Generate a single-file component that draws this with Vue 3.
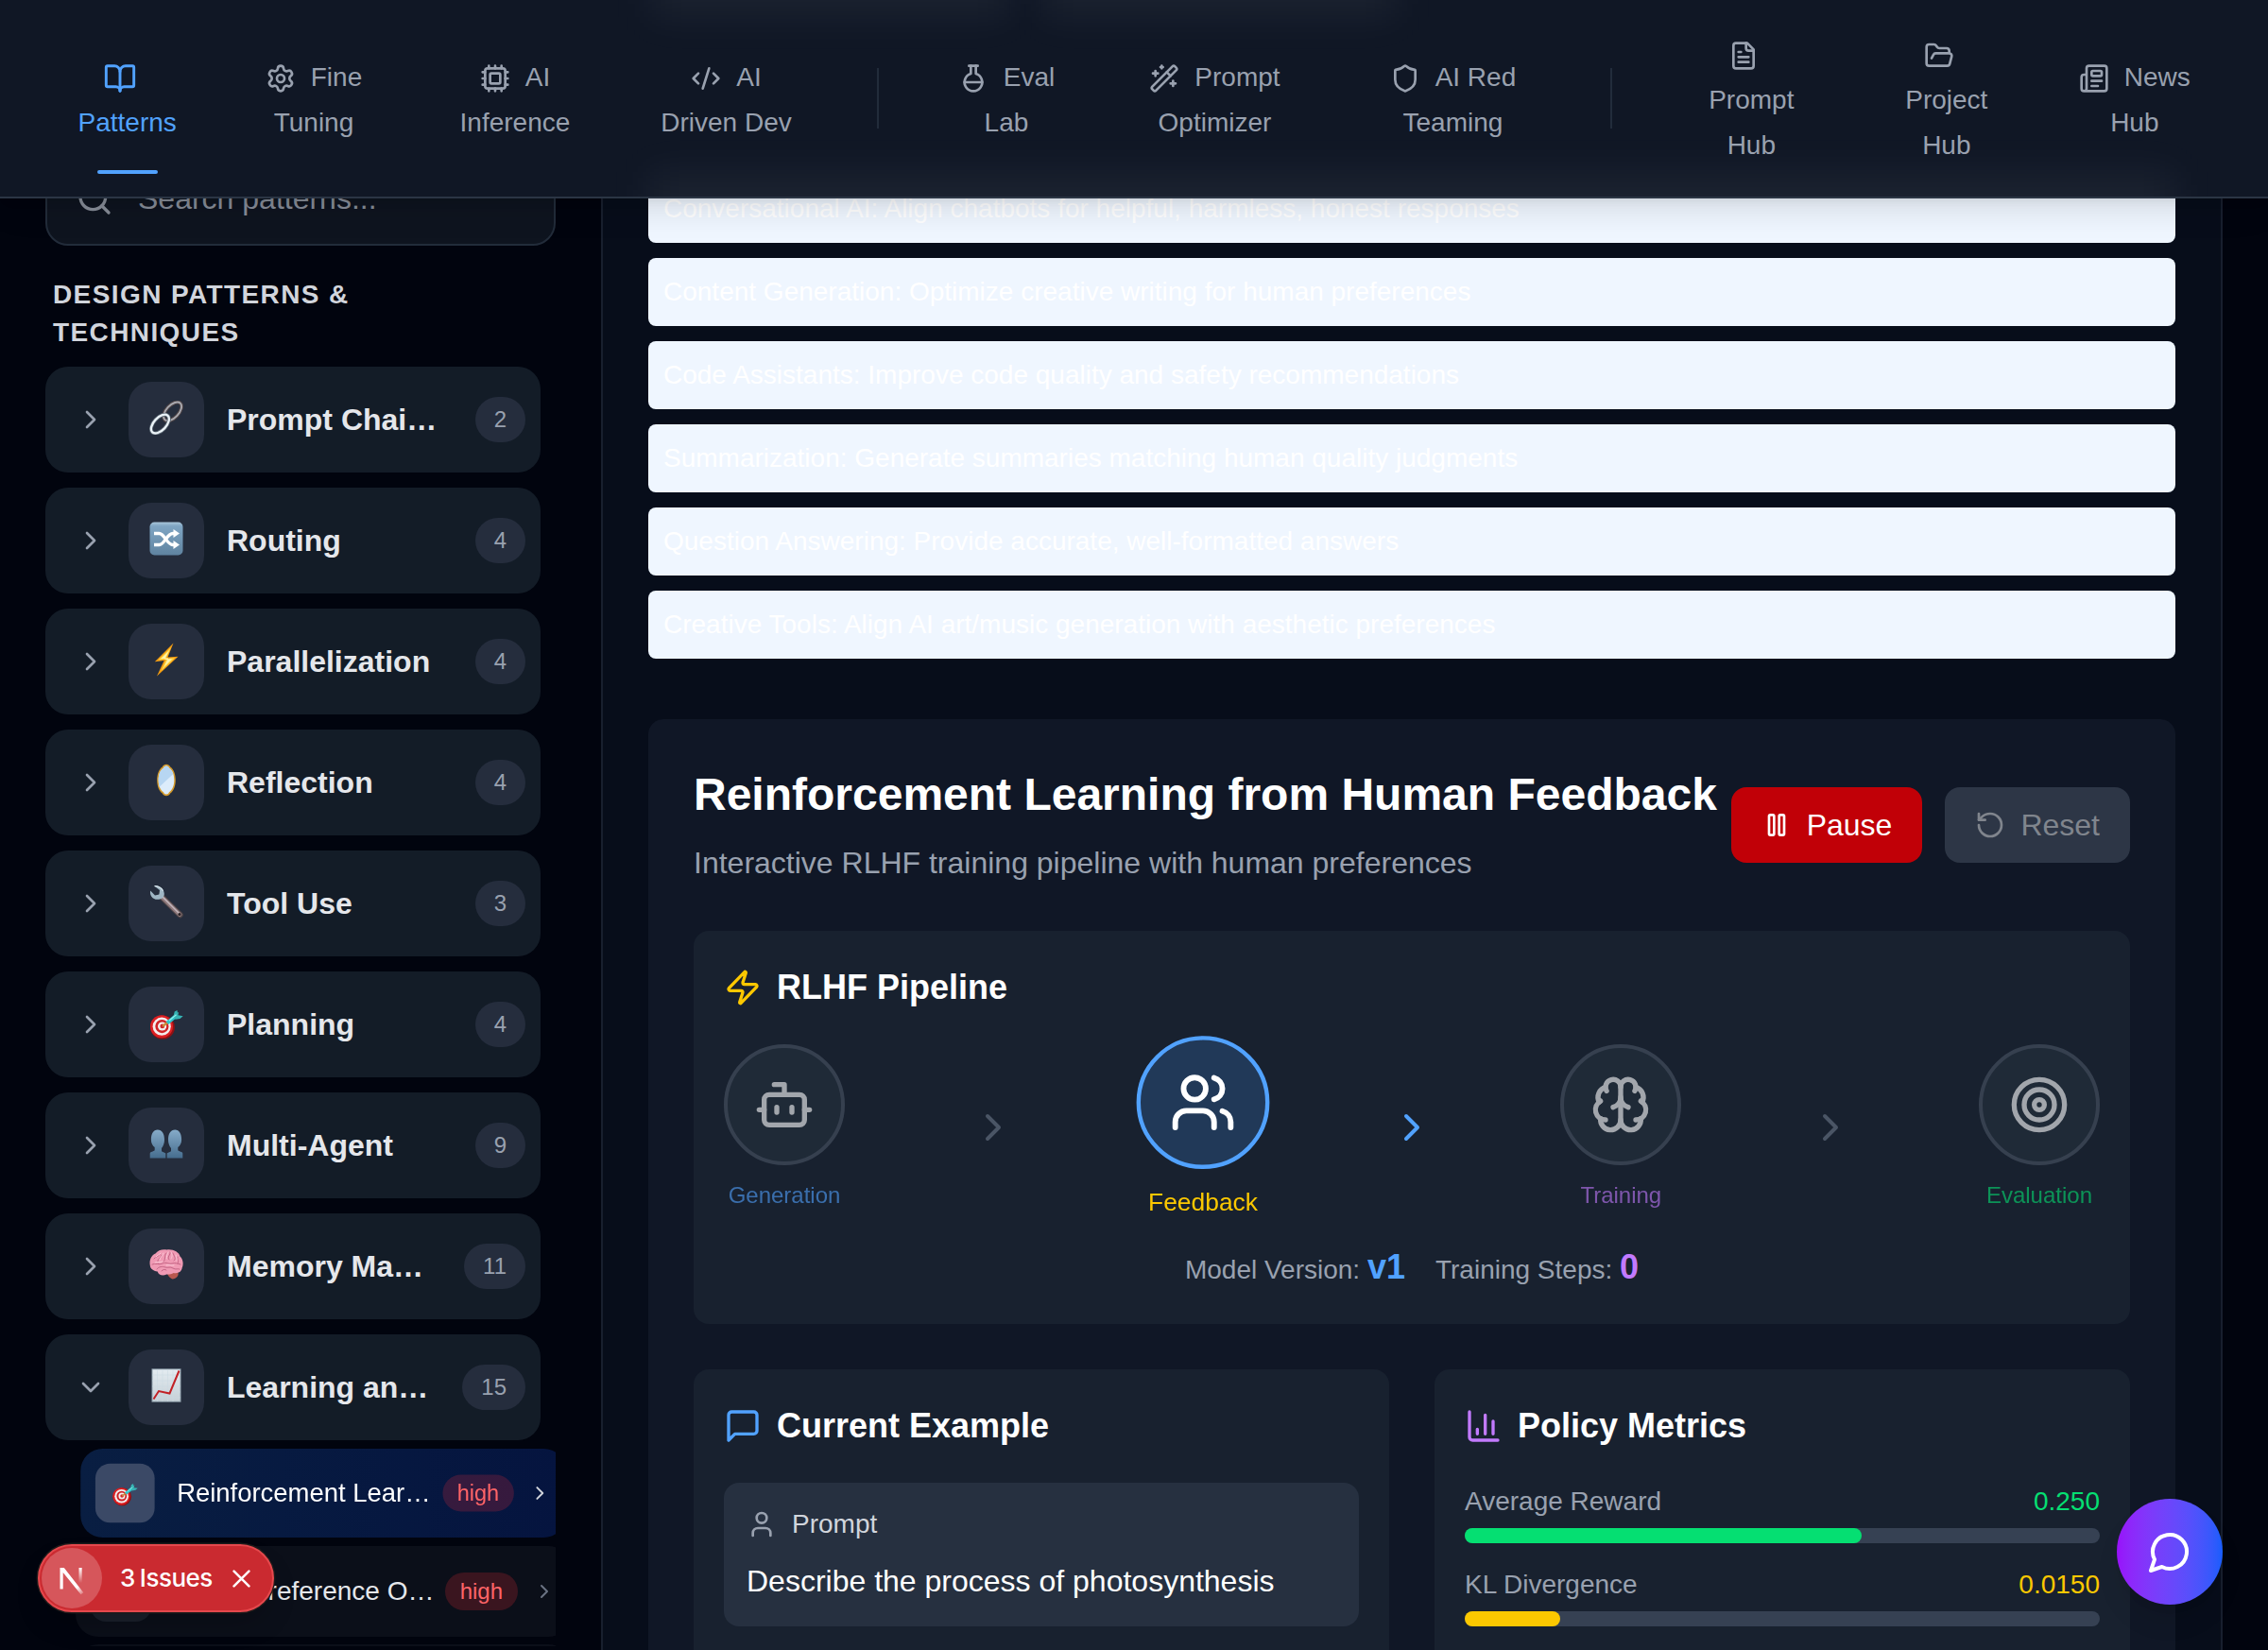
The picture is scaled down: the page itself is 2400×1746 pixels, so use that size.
<script setup>
const icons = {
  book: '<path d="M12 7v14"/><path d="M3 18a1 1 0 0 1-1-1V4a1 1 0 0 1 1-1h5a4 4 0 0 1 4 4 4 4 0 0 1 4-4h5a1 1 0 0 1 1 1v13a1 1 0 0 1-1 1h-6a3 3 0 0 0-3 3 3 3 0 0 0-3-3z"/>',
  settings: '<path d="M9.671 4.136a2.34 2.34 0 0 1 4.659 0 2.34 2.34 0 0 0 3.319 1.915 2.34 2.34 0 0 1 2.33 4.033 2.34 2.34 0 0 0 0 3.831 2.34 2.34 0 0 1-2.33 4.033 2.34 2.34 0 0 0-3.319 1.915 2.34 2.34 0 0 1-4.659 0 2.34 2.34 0 0 0-3.32-1.915 2.34 2.34 0 0 1-2.33-4.033 2.34 2.34 0 0 0 0-3.831A2.34 2.34 0 0 1 6.35 6.051a2.34 2.34 0 0 0 3.319-1.915"/><circle cx="12" cy="12" r="3"/>',
  cpu: '<rect x="4" y="4" width="16" height="16" rx="2"/><rect x="8" y="8" width="8" height="8" rx="1"/><path d="M12 20v2M12 2v2M17 20v2M17 2v2M2 12h2M2 17h2M2 7h2M20 12h2M20 17h2M20 7h2M7 20v2M7 2v2"/>',
  code: '<path d="m18 16 4-4-4-4"/><path d="m6 8-4 4 4 4"/><path d="m14.5 4-5 16"/>',
  flask: '<path d="M10 2v6.292a7 7 0 1 0 4 0V2"/><path d="M5 15h14"/><path d="M8.5 2h7"/>',
  wand: '<path d="m21.64 3.64-1.28-1.28a1.21 1.21 0 0 0-1.72 0L2.36 18.64a1.21 1.21 0 0 0 0 1.72l1.28 1.28a1.2 1.2 0 0 0 1.72 0L21.64 5.36a1.2 1.2 0 0 0 0-1.72"/><path d="m14 7 3 3M5 6v4M19 14v4M10 2v2M7 8H3M21 16h-4M11 3H9"/>',
  shield: '<path d="M20 13c0 5-3.5 7.5-7.66 8.95a1 1 0 0 1-.67-.01C7.5 20.5 4 18 4 13V6a1 1 0 0 1 1-1c2 0 4.5-1.2 6.24-2.72a1.17 1.17 0 0 1 1.52 0C14.51 3.81 17 5 19 5a1 1 0 0 1 1 1z"/>',
  file: '<path d="M15 2H6a2 2 0 0 0-2 2v16a2 2 0 0 0 2 2h12a2 2 0 0 0 2-2V7Z"/><path d="M14 2v4a2 2 0 0 0 2 2h4"/><path d="M10 9H8M16 13H8M16 17H8"/>',
  folder: '<path d="m6 14 1.5-2.9A2 2 0 0 1 9.24 10H20a2 2 0 0 1 1.94 2.5l-1.54 6a2 2 0 0 1-1.95 1.5H4a2 2 0 0 1-2-2V5a2 2 0 0 1 2-2h3.9a2 2 0 0 1 1.69.9l.81 1.2a2 2 0 0 0 1.67.9H18a2 2 0 0 1 2 2v2"/>',
  news: '<path d="M15 18h-5M18 14h-8"/><path d="M4 22h16a2 2 0 0 0 2-2V4a2 2 0 0 0-2-2H8a2 2 0 0 0-2 2v16a2 2 0 0 1-4 0v-9a2 2 0 0 1 2-2h2"/><rect x="10" y="6" width="8" height="4" rx="1"/>',
  search: '<circle cx="11" cy="11" r="8"/><path d="m21 21-4.34-4.34"/>',
  right: '<path d="m9 18 6-6-6-6"/>',
  down: '<path d="m6 9 6 6 6-6"/>',
  zap: '<path d="M4 14a1 1 0 0 1-.78-1.63l9.9-10.2a.5.5 0 0 1 .86.46l-1.92 6.02A1 1 0 0 0 13 10h7a1 1 0 0 1 .78 1.63l-9.9 10.2a.5.5 0 0 1-.86-.46l1.92-6.02A1 1 0 0 0 11 14z"/>',
  bot: '<path d="M12 8V4H8"/><rect x="4" y="8" width="16" height="12" rx="2"/><path d="M2 14h2M20 14h2M15 13v2M9 13v2"/>',
  users: '<path d="M16 21v-2a4 4 0 0 0-4-4H6a4 4 0 0 0-4 4v2"/><circle cx="9" cy="7" r="4"/><path d="M22 21v-2a4 4 0 0 0-3-3.87"/><path d="M16 3.13a4 4 0 0 1 0 7.75"/>',
  brain: '<path d="M12 18V5"/><path d="M15 13a4.17 4.17 0 0 1-3-4 4.17 4.17 0 0 1-3 4"/><path d="M17.598 6.5A3 3 0 1 0 12 5a3 3 0 1 0-5.598 1.5"/><path d="M17.997 5.125a4 4 0 0 1 2.526 5.77"/><path d="M18 18a4 4 0 0 0 2-7.464"/><path d="M19.967 17.483A4 4 0 1 1 12 18a4 4 0 1 1-7.967-.517"/><path d="M6 18a4 4 0 0 1-2-7.464"/><path d="M6.003 5.125a4 4 0 0 0-2.526 5.77"/>',
  target: '<circle cx="12" cy="12" r="10"/><circle cx="12" cy="12" r="6"/><circle cx="12" cy="12" r="2"/>',
  pause: '<rect x="14" y="4" width="4" height="16" rx="1"/><rect x="6" y="4" width="4" height="16" rx="1"/>',
  reset: '<path d="M3 12a9 9 0 1 0 9-9 9.75 9.75 0 0 0-6.74 2.74L3 8"/><path d="M3 3v5h5"/>',
  message: '<path d="M21 15a2 2 0 0 1-2 2H7l-4 4V5a2 2 0 0 1 2-2h14a2 2 0 0 1 2 2z"/>',
  chart: '<path d="M3 3v16a2 2 0 0 0 2 2h16"/><path d="M18 17V9M13 17V5M8 17v-3"/>',
  user: '<path d="M19 21v-2a4 4 0 0 0-4-4H9a4 4 0 0 0-4 4v2"/><circle cx="12" cy="7" r="4"/>',
  chat: '<path d="M7.9 20A9 9 0 1 0 4 16.1L2 22Z"/>'
}

const emoji = {
  link: '<g fill="none"><ellipse cx="24.600" cy="11.400" rx="6.600" ry="12" transform="rotate(43 24.600 11.400)" stroke="#4f4547" stroke-width="4"/><ellipse cx="24.600" cy="11.400" rx="6.600" ry="12" transform="rotate(43 24.600 11.400)" stroke="#a9a9b0" stroke-width="1.900"/><ellipse cx="11.400" cy="24.600" rx="6.600" ry="12" transform="rotate(43 11.400 24.600)" stroke="#586470" stroke-width="4"/><ellipse cx="11.400" cy="24.600" rx="6.600" ry="12" transform="rotate(43 11.400 24.600)" stroke="#eaf2f7" stroke-width="2.300"/></g>',
  shuffle: '<defs><linearGradient id="ems" x1="0" y1="0" x2="0" y2="1"><stop offset="0" stop-color="#a9c6da"/><stop offset=".12" stop-color="#7fa5c3"/><stop offset="1" stop-color="#5f83a0"/></linearGradient></defs><rect x=".5" y=".5" width="35" height="35" rx="5" fill="url(#ems)"/><g fill="none" stroke="#fff" stroke-width="3.4"><path d="M5 12.500h5.500c5.500 0 8 12 14.500 12h2"/><path d="M5 24.500h5.500c5.500 0 8-12 14.500-12h2"/></g><path d="M25.500 8l6.500 4.500-6.500 4.500zM25.500 20l6.500 4.500-6.500 4.500z" fill="#fff"/>',
  bolt: '<path d="M25.500.5 5.800 20.300l9.800-1.300L8 35.500l22.500-20.800-11 .8z" fill="#f39c12"/><path d="M23 5 9.500 18.600l8.500-1L12.500 30 27 16.200l-9.500.8z" fill="#ffd94a"/><path d="M21 8.500 12.500 17l7.500-.8-4 9 8-8-8 .6z" fill="#fff4b0"/>',
  mirror: '<path d="M18 .8c1.800 0 3.400.8 4.200 2.600 3.800 2.600 5.600 8.200 5.600 14.100s-1.800 11.400-5.600 14c-.8 1.800-2.400 2.700-4.200 2.700s-3.400-.9-4.200-2.700c-3.800-2.600-5.600-8.100-5.600-14s1.800-11.500 5.600-14.100c.8-1.800 2.400-2.600 4.200-2.600z" fill="#d49a2c"/><path d="M18 2.600c1.500 0 2.300.7 3 2.200 3.600 2.200 5.300 7.200 5.300 12.700s-1.700 10.400-5.300 12.700c-.7 1.500-1.500 2.200-3 2.200s-2.300-.7-3-2.200c-3.600-2.300-5.300-7.200-5.300-12.700S11.400 7 15 4.800c.7-1.500 1.500-2.200 3-2.200z" fill="#dcecfb"/><path d="M15 4.800c.7-1.500 1.500-2.200 3-2.200s2.300.7 3 2.200c2 1.200 3.400 3.400 4.300 6.100L10.600 24.700c-.6-2.200-.9-4.700-.9-7.200C9.700 12 11.400 7 15 4.800z" fill="#b7d6f2"/>',
  wrench: '<g transform="translate(0 1)"><path d="M12.500 11.500 32.500 31" stroke="#4b4346" stroke-width="6.600" stroke-linecap="round"/><path d="M12.500 11.500 32.300 30.800" stroke="#8f797c" stroke-width="4.400" stroke-linecap="round"/><path d="M12 10 31 29" stroke="#c3b8bd" stroke-width="1.400" stroke-linecap="round"/><path d="M5.500.7 11 5l-.6 4.600-4.400.8L1.200 5.400C0 10 3.500 14.800 8.500 14.800c5 0 7.500-2.600 7.300-6.300C15.500 3.500 10.500-.8 5.500.7z" fill="#9fb6c4"/><path d="M5.500.7c3-.5 7.500 1.500 9 5" stroke="#dbe8ef" stroke-width="1.200" fill="none"/><circle cx="32" cy="30.600" r="1.500" fill="#2a2225"/></g>',
  dart: '<ellipse cx="14" cy="23" rx="12.900" ry="12.600" fill="#8f1013"/><circle cx="13" cy="22.300" r="12" fill="#dc1f22"/><circle cx="13.200" cy="22.200" r="9.600" fill="#f3eded"/><circle cx="13.400" cy="22.100" r="7.100" fill="#cf2427"/><circle cx="13.600" cy="22" r="4.600" fill="#f3eded"/><circle cx="13.800" cy="21.900" r="2.400" fill="#cf2427"/><path d="M14 22 20 17.500" stroke="#c98a35" stroke-width="2.200"/><path d="M19 18.500 27.500 11.500" stroke="#2cc4cc" stroke-width="4.200"/><path d="m25.500 11.500 1.200-5 2.800-1.600.4 2.800 1.300-.9-.8 3.500 5.300.9-3.200 2.700-5 .9z" fill="#36b3b4"/><path d="m21 16 7.500-6.200" stroke="#8ff0ec" stroke-width="1.200"/>',
  people: '<defs><linearGradient id="emp" x1="0" y1="0" x2="0" y2="1"><stop offset="0" stop-color="#86abc9"/><stop offset="1" stop-color="#466d8e"/></linearGradient></defs><path d="M8.800 3.500c4.700 0 7.200 4.500 7.200 10.600 0 3.900-1.200 6.700-3 8.900v3.200c1.800 1 3.500 1.500 4.300 2.400v4.800H.7v-5c.5-1.900 3.500-1.800 5-3.200V22C3.500 20.500 1.900 17.800 1.900 14 1.900 7.800 4.200 3.500 8.800 3.500z" fill="url(#emp)"/><path d="M27.200 3.500c-4.700 0-7.200 4.500-7.200 10.600 0 3.900 1.200 6.700 3 8.900v3.200c-1.800 1-3.500 1.500-4.300 2.400v4.800h16.600v-5c-.5-1.900-3.500-1.800-5-3.200V22c2.200-1.500 3.800-4.200 3.800-8 0-6.200-2.300-10.500-6.900-10.500z" fill="url(#emp)"/>',
  brain: '<path d="M18 25c5-1.500 11-.5 12.500 2 .8 3-2 6-6 6.500-3-1-5.500-4.500-6.500-8.500z" fill="#b8574f"/><path d="M.8 19C-.5 13 3 7.500 6.500 6.500 9 3 14 1.500 18.500 2.500c6.500-1 13 2.500 14 7 3.500 3 3.800 8.500 2.200 12-.5 4-4 6.500-9 5.500-3 2-6 1.500-7.500 1.500-4 2.500-8.500.5-9.500-3C4 24.800 1 22.500.8 19z" fill="#f09ab4"/><g fill="none" stroke="#bf6080" stroke-width=".9" stroke-linecap="round"><path d="M5 12c2-3 5-2 6-4.500M9 16c-1-4 3-4 4-8M15 15c3-2 0-6 3-9M21 13c-3-3 2-5 1-8M26 14c3-2 0-5-1-8M30 17c2-2-1-4 0-7M3 18c4-2 7 1 11-1s7 1 10 0 6 0 9 1M8 23c2-3 6-3 9-2s5-1 8 1 5 0 7 1M13 25c1-2 4-2 5-1"/></g><g fill="none" stroke="#fbc9d7" stroke-width="1" stroke-linecap="round"><path d="M7 10c1-2 4-2 5-4M11 13c0-3 3-3 4-7M18 12c1-2 0-4 2-7M23 12c1-2 2-4 0-7M29 14c1-2-1-4-1-6M6 16c3-1 5 0 8-1M18 19c3-1 5 0 8 0"/></g>',
  graph: '<defs><linearGradient id="emg" x1="0" y1="0" x2="0" y2="1"><stop offset="0" stop-color="#e3ebf0"/><stop offset="1" stop-color="#c6d0d7"/></linearGradient></defs><rect x="2.500" y=".3" width="31" height="35.400" fill="#8fa0ac"/><rect x="3.500" y="1.300" width="29" height="33.400" fill="url(#emg)"/><path d="M8.500 1v34M14 1v34M19.500 1v34M25 1v34M3 7h30M3 13h30M3 19h30M3 25h30M3 31h30" stroke="#c9d8e2" stroke-width=".5"/><path d="M4.500 32.500 10 24l11.500 2.500L31.500 2.500" fill="none" stroke="#c22126" stroke-width="2"/>'
}

const navGroups = [
  [
    { icon: 'book', lead: '', rest: ['Patterns'], width: 197.4, active: true },
    { icon: 'settings', lead: 'Fine', rest: ['Tuning'], width: 197.2 },
    { icon: 'cpu', lead: 'AI', rest: ['Inference'], width: 228.8 },
    { icon: 'code', lead: 'AI', rest: ['Driven Dev'], width: 218.2 }
  ],
  [
    { icon: 'flask', lead: 'Eval', rest: ['Lab'], width: 168 },
    { icon: 'wand', lead: 'Prompt', rest: ['Optimizer'], width: 273 },
    { icon: 'shield', lead: 'AI Red', rest: ['Teaming'], width: 231 }
  ],
  [
    { icon: 'file', lead: '', rest: ['Prompt', 'Hub'], width: 194 },
    { icon: 'folder', lead: '', rest: ['Project', 'Hub'], width: 219 },
    { icon: 'news', lead: 'News', rest: ['Hub'], width: 179 }
  ]
]

const categories = [
  { name: 'Prompt Chaining', icon: 'link', count: 2 },
  { name: 'Routing', icon: 'shuffle', count: 4 },
  { name: 'Parallelization', icon: 'bolt', count: 4 },
  { name: 'Reflection', icon: 'mirror', count: 4 },
  { name: 'Tool Use', icon: 'wrench', count: 3 },
  { name: 'Planning', icon: 'dart', count: 4 },
  { name: 'Multi-Agent', icon: 'people', count: 9 },
  { name: 'Memory Management', icon: 'brain', count: 11 },
  { name: 'Learning and Adaptation', icon: 'graph', count: 15, open: true }
]

const techniques = [
  { name: 'Reinforcement Learning from Human Feedback', icon: 'dart', active: true },
  { name: 'Direct Preference Optimization', icon: 'graph' }
]

const useCases = [
  'Conversational AI: Align chatbots for helpful, harmless, honest responses',
  'Content Generation: Optimize creative writing for human preferences',
  'Code Assistants: Improve code quality and safety recommendations',
  'Summarization: Generate summaries matching human quality judgments',
  'Question Answering: Provide accurate, well-formatted answers',
  'Creative Tools: Align AI art/music generation with aesthetic preferences'
]

const stages = [
  { name: 'Generation', icon: 'bot', tone: 'blue' },
  { name: 'Feedback', icon: 'users', tone: 'yellow', active: true },
  { name: 'Training', icon: 'brain', tone: 'purple' },
  { name: 'Evaluation', icon: 'target', tone: 'green' }
]

const metrics = [
  { name: 'Average Reward', value: '0.250', fill: 62.5, tone: 'green' },
  { name: 'KL Divergence', value: '0.0150', fill: 15, tone: 'yellow' }
]
</script>

<template>
  <div class="page">
    <div class="layout">
      <aside class="sidebar">
        <div class="search">
          <svg class="ico s40" viewBox="0 0 24 24" v-html="icons.search"></svg>
          <span>Search patterns...</span>
        </div>
        <h3 class="side-title">Design Patterns &amp; Techniques</h3>
        <div class="cats">
          <div v-for="c in categories" :key="c.name" class="cat">
            <svg class="ico s32 muted" viewBox="0 0 24 24" v-html="c.open ? icons.down : icons.right"></svg>
            <span class="cat-icon"><svg class="emoji" viewBox="0 0 36 36" v-html="emoji[c.icon]"></svg></span>
            <span class="cat-name">{{ c.name }}</span>
            <span class="count">{{ c.count }}</span>
          </div>
        </div>
        <div class="subs">
          <div v-for="t in techniques" :key="t.name" class="sub" :class="{ active: t.active }">
            <span class="sub-icon"><svg class="emoji small" viewBox="0 0 36 36" v-html="emoji[t.icon]"></svg></span>
            <span class="sub-name">{{ t.name }}</span>
            <span class="level">high</span>
            <svg class="ico s24 sub-arrow" viewBox="0 0 24 24" v-html="icons.right"></svg>
          </div>
          <div class="sub"></div>
        </div>
      </aside>

      <main class="panel">
        <ul class="cases">
          <li v-for="u in useCases" :key="u">{{ u }}</li>
        </ul>

        <section class="demo">
          <header class="demo-head">
            <div>
              <h2>Reinforcement Learning from Human Feedback</h2>
              <p>Interactive RLHF training pipeline with human preferences</p>
            </div>
            <div class="actions">
              <button class="btn pause"><svg class="ico s32" viewBox="0 0 24 24" v-html="icons.pause"></svg>Pause</button>
              <button class="btn reset"><svg class="ico s32" viewBox="0 0 24 24" v-html="icons.reset"></svg>Reset</button>
            </div>
          </header>

          <div class="card pipeline">
            <h3><svg class="ico s40 t-yellow" viewBox="0 0 24 24" v-html="icons.zap"></svg>RLHF Pipeline</h3>
            <div class="stages">
              <template v-for="(s, i) in stages" :key="s.name">
                <div class="stage" :class="{ active: s.active }">
                  <span class="disc"><svg class="ico s64" viewBox="0 0 24 24" v-html="icons[s.icon]"></svg></span>
                  <span class="stage-name" :class="'t-' + s.tone">{{ s.name }}</span>
                </div>
                <svg v-if="i < 3" class="ico s48 step" :class="{ 't-blue': s.active }" viewBox="0 0 24 24" v-html="icons.right"></svg>
              </template>
            </div>
            <div class="summary">
              <span>Model Version: <b class="t-blue">v1</b></span>
              <span>Training Steps: <b class="t-purple">0</b></span>
            </div>
          </div>

          <div class="cols">
            <div class="card">
              <h3><svg class="ico s40 t-blue" viewBox="0 0 24 24" v-html="icons.message"></svg>Current Example</h3>
              <div class="prompt">
                <div class="prompt-head"><svg class="ico s32 muted" viewBox="0 0 24 24" v-html="icons.user"></svg>Prompt</div>
                <p>Describe the process of photosynthesis</p>
              </div>
            </div>
            <div class="card">
              <h3><svg class="ico s40 t-purple" viewBox="0 0 24 24" v-html="icons.chart"></svg>Policy Metrics</h3>
              <div class="metrics">
                <div v-for="m in metrics" :key="m.name">
                  <div class="metric-row"><span>{{ m.name }}</span><span :class="'t-' + m.tone">{{ m.value }}</span></div>
                  <div class="bar" :class="'t-' + m.tone"><i :style="{ width: m.fill + '%' }"></i></div>
                </div>
              </div>
            </div>
          </div>
        </section>
      </main>
    </div>

    <nav class="nav">
      <div class="glow"><i class="tile-a"></i><i class="tile-b"></i><i class="row"></i></div>
      <template v-for="(g, gi) in navGroups" :key="gi">
        <span v-if="gi" class="divider"></span>
        <a v-for="n in g" :key="n.icon" class="nav-item" :class="{ active: n.active }" :style="{ width: n.width + 'px' }">
          <svg class="ico s32 nav-ico" viewBox="0 0 24 24" v-html="icons[n.icon]"></svg>{{ n.lead }}<template v-for="r in n.rest" :key="r"><br>{{ r }}</template>
        </a>
      </template>
    </nav>

    <div class="issues">
      <span class="logo">
        <svg viewBox="0 0 64 64">
          <defs>
            <linearGradient id="ngA" x1="38" y1="41" x2="46" y2="50" gradientUnits="userSpaceOnUse"><stop stop-color="#fff" /><stop offset="1" stop-color="#fff" stop-opacity="0" /></linearGradient>
            <linearGradient id="ngB" x1="0" y1="21" x2="0" y2="37" gradientUnits="userSpaceOnUse"><stop stop-color="#fff" /><stop offset="1" stop-color="#fff" stop-opacity="0" /></linearGradient>
          </defs>
          <path d="M19.500 21h4.300l20.500 26.300-2.700 1.900L22.700 26v17.500h-3.200z" fill="url(#ngA)" />
          <rect x="39.500" y="21" width="3.200" height="17" fill="url(#ngB)" />
        </svg>
      </span>
      <span class="issues-text">3 <span>Issues</span></span>
      <svg class="close" viewBox="0 0 18 18"><path d="M1.500 1.500l15 15M16.500 1.500l-15 15" /></svg>
    </div>

    <button class="chat"><svg class="ico s48" viewBox="0 0 24 24" v-html="icons.chat"></svg></button>
  </div>
</template>

<style>
html,
body {
  margin: 0;
  background: #01040e;
}
</style>

<style scoped>
* {
  box-sizing: border-box;
}
.page {
  position: relative;
  width: 2400px;
  height: 1746px;
  overflow: hidden;
  background: #01040e;
  color: #fff;
  font-family: "Liberation Sans", Arial, sans-serif;
  font-size: 32px;
  line-height: 48px;
}
h2, h3, p, ul {
  margin: 0;
  padding: 0;
}
button {
  border: 0;
  font: inherit;
}
.ico {
  flex: none;
  fill: none;
  stroke: currentColor;
  stroke-width: 2;
  stroke-linecap: round;
  stroke-linejoin: round;
}
.s24 { width: 24px; height: 24px; }
.s32 { width: 32px; height: 32px; }
.s40 { width: 40px; height: 40px; }
.s48 { width: 48px; height: 48px; }
.s64 { width: 64px; height: 64px; }
.muted { color: #99a1af; }
.t-blue { color: #51a2ff; }
.t-yellow { color: #fcc800; }
.t-purple { color: #c27aff; }
.t-green { color: #05df72; }

.layout {
  display: flex;
  height: 1746px;
}

/* sidebar */
.sidebar {
  width: 636px;
  height: 1742px;
  padding: 160px 48px 0;
  overflow: hidden;
}
.search {
  display: flex;
  align-items: center;
  gap: 26px;
  width: 540px;
  height: 100px;
  padding: 0 30px;
  border: 2px solid #222c3a;
  border-radius: 24px;
  background: #0e141f;
  color: #868c97;
}
.side-title {
  width: 400px;
  margin: 32px 0 16px 8px;
  font-size: 28px;
  line-height: 40px;
  letter-spacing: 1.4px;
  text-transform: uppercase;
  color: #d1d5dc;
}
.cats {
  display: flex;
  flex-direction: column;
  gap: 16px;
  width: 524px;
}
.cat {
  display: flex;
  align-items: center;
  gap: 24px;
  height: 112px;
  padding: 0 16px 0 32px;
  border-radius: 24px;
  background: #131c27;
}
.cat-icon {
  display: flex;
  flex: none;
  align-items: center;
  justify-content: center;
  width: 80px;
  height: 80px;
  padding-bottom: 4px;
  border-radius: 24px;
  background: #252d3d;
}
.emoji {
  width: 36px;
  height: 36px;
}
.emoji.small {
  width: 28px;
  height: 28px;
}
.cat-name {
  flex: 1;
  min-width: 0;
  overflow: hidden;
  font-weight: 700;
  white-space: nowrap;
  text-overflow: ellipsis;
  color: #e5e7eb;
}
.count {
  padding: 0 20px;
  border-radius: 24px;
  background: #252d3d;
  font-size: 24px;
  color: #99a1af;
}
.subs {
  display: flex;
  flex-direction: column;
  gap: 8px;
  width: 508px;
  margin: 8px 0 0 32px;
  overflow: hidden;
}
.sub {
  display: flex;
  flex: none;
  align-items: center;
  width: 524px;
  height: 96px;
  padding: 0 16px;
  border-radius: 24px;
  background: #0b0f19;
  font-size: 28px;
  line-height: 40px;
}
.sub.active {
  background: linear-gradient(90deg in oklab, #091e42, #05143f);
  transform: scale(0.98);
}
.sub-icon {
  display: flex;
  flex: none;
  align-items: center;
  justify-content: center;
  width: 64px;
  height: 64px;
  border-radius: 16px;
  background: #1a202b;
}
.active .sub-icon {
  background: #3b4966;
}
.sub-name {
  flex: 1;
  min-width: 0;
  margin: 0 8px 0 24px;
  overflow: hidden;
  white-space: nowrap;
  text-overflow: ellipsis;
  color: #e5e7eb;
}
.active .sub-name {
  color: #fff;
}
.level {
  margin-right: 16px;
  padding: 0 16px;
  border-radius: 20px;
  background: rgba(251, 44, 54, 0.2);
  font-size: 24px;
  color: #ff6467;
}
.sub-arrow {
  color: #6a7282;
}
.active .sub-arrow {
  color: #d1d5dc;
}

/* main panel */
.panel {
  width: 1716px;
  height: 1746px;
  padding: 185px 48px 0;
  overflow: hidden;
  border: solid #181f2e;
  border-width: 0 2px;
  background: #070d1a;
}
.cases {
  display: flex;
  flex-direction: column;
  gap: 16px;
  list-style: none;
}
.cases li {
  padding: 16px;
  border-radius: 8px;
  background: #eff6ff;
  font-size: 28px;
  line-height: 40px;
  color: #fff;
}
.demo {
  height: 1200px;
  margin-top: 64px;
  padding: 48px;
  border-radius: 16px;
  background: #101726;
}
.demo-head {
  display: flex;
  align-items: center;
  justify-content: space-between;
  height: 128px;
}
.demo-head h2 {
  font-size: 48px;
  line-height: 64px;
  white-space: nowrap;
}
.demo-head p {
  margin-top: 16px;
  color: #99a1af;
}
.actions {
  display: flex;
  gap: 24px;
}
.btn {
  display: flex;
  align-items: center;
  gap: 16px;
  height: 80px;
  padding: 0 32px;
  border-radius: 16px;
  color: #fff;
}
.pause {
  background: #c10007;
}
.reset {
  background: #2d3646;
  color: #80858d;
}
.card {
  padding: 32px;
  border-radius: 16px;
  background: #18212f;
}
.card h3 {
  display: flex;
  align-items: center;
  gap: 16px;
  margin-bottom: 32px;
  font-size: 36px;
  line-height: 56px;
}
.pipeline {
  margin-top: 48px;
}
.stages {
  display: flex;
  align-items: center;
  justify-content: space-between;
}
.stage {
  display: flex;
  flex-direction: column;
  align-items: center;
  gap: 16px;
  width: 128px;
  opacity: 0.6;
}
.stage.active {
  opacity: 1;
  transform: scale(1.1);
}
.disc {
  display: flex;
  align-items: center;
  justify-content: center;
  width: 128px;
  height: 128px;
  border: 4px solid #4a5565;
  border-radius: 50%;
  background: #24303d;
}
.active .disc {
  border-color: #51a2ff;
  background: #213958;
}
.stage-name {
  font-size: 24px;
  line-height: 32px;
}
.step {
  color: #4a5565;
}
.step.t-blue {
  color: #51a2ff;
}
.summary {
  display: flex;
  justify-content: center;
  gap: 32px;
  height: 56px;
  margin-top: 32px;
  font-size: 28px;
  line-height: 56px;
  color: #99a1af;
}
.summary b {
  font-size: 36px;
}
.cols {
  display: grid;
  grid-template-columns: 1fr 1fr;
  gap: 48px;
  height: 500px;
  margin-top: 48px;
}
.prompt {
  padding: 24px;
  border-radius: 16px;
  background: #263040;
}
.prompt-head {
  display: flex;
  align-items: center;
  gap: 16px;
  margin-bottom: 16px;
  font-size: 28px;
  line-height: 40px;
  color: #d1d5dc;
}
.metrics {
  display: flex;
  flex-direction: column;
  gap: 24px;
}
.metric-row {
  display: flex;
  justify-content: space-between;
  margin-bottom: 8px;
  font-size: 28px;
  line-height: 40px;
}
.metric-row span:first-child {
  color: #99a1af;
}
.bar {
  height: 16px;
  border-radius: 8px;
  background: #364153;
}
.bar i {
  display: block;
  height: 16px;
  border-radius: 8px;
  background: currentColor;
}

/* top navigation, laid over the scrolled page */
.nav {
  position: absolute;
  top: 0;
  left: 0;
  display: flex;
  align-items: center;
  width: 2400px;
  height: 210px;
  padding: 0 36px;
  border-bottom: 2px solid #2b3544;
  background: #101725;
  box-shadow: 0 20px 30px -6px rgba(0, 0, 0, 0.1), 0 8px 12px -8px rgba(0, 0, 0, 0.1);
}
.glow {
  position: absolute;
  inset: 0;
  overflow: hidden;
}
.glow i {
  position: absolute;
  background: rgba(239, 240, 250, 0.05);
  filter: blur(20px);
}
.glow .tile-a {
  left: 688px;
  top: -80px;
  width: 380px;
  height: 98px;
}
.glow .tile-b {
  left: 1102px;
  top: -80px;
  width: 376px;
  height: 98px;
}
.glow .row {
  left: 686px;
  top: 182px;
  width: 1616px;
  height: 100px;
}
.nav-item {
  position: relative;
  flex: none;
  padding-top: 4px;
  font-size: 28px;
  line-height: 48px;
  text-align: center;
  color: #99a1af;
}
.nav-item.active {
  color: #51a2ff;
}
.nav-item.active::after {
  content: "";
  position: absolute;
  left: 50%;
  bottom: -30px;
  width: 64px;
  height: 4px;
  margin-left: -32px;
  border-radius: 2px;
  background: #51a2ff;
}
.nav-ico {
  position: relative;
  top: -1px;
  margin-right: 16px;
  vertical-align: middle;
}
.active .nav-ico {
  transform: scale(1.1);
}
.divider {
  flex: none;
  width: 2px;
  height: 64px;
  margin: 0 50.700px;
  background: #222c3b;
}

/* floating widgets */
.issues {
  position: absolute;
  left: 40px;
  top: 1634px;
  display: flex;
  align-items: center;
  width: 250px;
  height: 72px;
  padding-left: 2px;
  border: 2px solid #e5484d;
  border-radius: 36px;
  background: #ca2a30;
  box-shadow: 0 0 0 1.500px #1d1a1a, 0 16px 32px -8px rgba(0, 0, 0, 0.24);
}
.logo {
  width: 64px;
  height: 64px;
  border-radius: 50%;
  background: #d6565b;
}
.logo svg {
  display: block;
}
.issues-text {
  display: flex;
  gap: 5px;
  width: 99px;
  margin-left: 19px;
  font: 500 26px/36px Inter, sans-serif;
  letter-spacing: -0.5px;
}
.close {
  width: 19px;
  height: 19px;
  margin-left: 20px;
  fill: none;
  stroke: #fff;
  stroke-width: 2.400;
  stroke-linecap: round;
}
.chat {
  position: absolute;
  left: 2240px;
  top: 1586px;
  display: flex;
  align-items: center;
  justify-content: center;
  width: 112px;
  height: 112px;
  padding: 0;
  border-radius: 50%;
  background: linear-gradient(90deg in oklab, #9810fa, #155dfc);
  color: #fff;
  box-shadow: 0 20px 30px -6px rgba(0, 0, 0, 0.1), 0 8px 12px -8px rgba(0, 0, 0, 0.1);
}
</style>
